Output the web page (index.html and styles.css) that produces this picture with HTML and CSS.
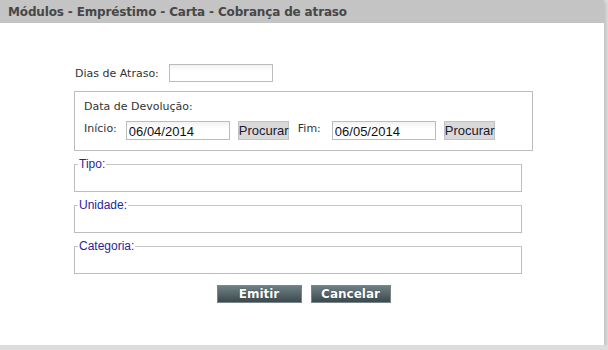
FILE: index.html
```html
<!DOCTYPE html>
<html lang="pt-BR">
<head>
    <meta charset="UTF-8">
    <title>Cobrança de atraso</title>
    <link rel="stylesheet" href="styles.css">
</head>
<body>
    <div class="panel">
        <div class="panel-header">Módulos - Empréstimo - Carta - Cobrança de atraso</div>

        <div class="panel-body">
            <form class="report-form">
                <div class="field-row">
                    <label class="lbl" for="dias">Dias de Atraso:</label>
                    <input type="text" id="dias" class="txt txt-short">
                </div>

                <div class="box">
                    <div class="lbl">Data de Devolução:</div>
                    <div class="date-row">
                        <label class="lbl lbl-up" for="inicio">Início:</label>
                        <input type="text" id="inicio" class="txt" value="06/04/2014">
                        <button type="button" class="btn-search">Procurar</button>
                        <label class="lbl lbl-up lbl-fim" for="fim">Fim:</label>
                        <input type="text" id="fim" class="txt" value="06/05/2014">
                        <button type="button" class="btn-search">Procurar</button>
                    </div>
                </div>

                <fieldset class="group">
                    <legend>Tipo:</legend>
                    <div class="group-body"></div>
                </fieldset>
                <fieldset class="group">
                    <legend>Unidade:</legend>
                    <div class="group-body"></div>
                </fieldset>
                <fieldset class="group">
                    <legend>Categoria:</legend>
                    <div class="group-body"></div>
                </fieldset>

                <div class="actions">
                    <button type="button" class="btn-dark btn-emitir">Emitir</button>
                    <button type="button" class="btn-dark btn-cancelar">Cancelar</button>
                </div>
            </form>
        </div>
    </div>
</body>
</html>
```

FILE: styles.css
```css
body {
    margin: 0;
    padding: 0;
    background-color: #dcdcdc;
    font-family: 'DejaVu Sans', Verdana, sans-serif;
    color: #333;
}

.panel {
    width: 604px;
    height: 345px;
    background: white;
    box-shadow: 2px 2px 3px rgba(0, 0, 0, 0.12);
    display: flex;
    flex-direction: column;
}

.panel-header {
    height: 23px;
    line-height: 24px;
    padding-left: 8px;
    background-color: #c4c4c4;
    color: #474747;
    font-size: 12px;
    font-weight: bold;
    letter-spacing: -0.15px;
}

.panel-body {
    flex: 1;
    margin-left: 3px;
    background: white;
}

.report-form {
    width: 459px;
    margin-left: 71px;
    padding-top: 41px;
}

.lbl {
    font-size: 11px;
    color: #333;
}

.field-row {
    display: flex;
    align-items: center;
    gap: 10px;
    padding-left: 1px;
}

.txt {
    box-sizing: border-box;
    width: 104px;
    height: 19px;
    margin: 0;
    padding: 1px 2px 0;
    border: 1px solid #bcbcbc;
    background: linear-gradient(#f2f2f2, #ffffff 40%);
    font-family: 'Liberation Sans', Arial, sans-serif;
    font-size: 13px;
    color: #111;
    outline: none;
}

.txt-short {
    height: 18px;
}

.box {
    margin-top: 9px;
    height: 60px;
    box-sizing: border-box;
    border: 1px solid #bdbdbd;
    padding: 8px 0 0 9px;
    width: 459px;
}

.date-row {
    display: flex;
    align-items: flex-start;
    margin-top: 8px;
}

.lbl-up {
    margin-top: 1px;
    margin-right: 9px;
}

.lbl-fim {
    margin-left: 9px;
    margin-right: 11px;
}

.btn-search {
    height: 19px;
    width: 51px;
    margin: 0 0 0 8px;
    padding: 0;
    border: 1px solid #c2c2c2;
    background-color: #d9d9d9;
    font-family: 'Liberation Sans', Arial, sans-serif;
    font-size: 13px;
    color: #1a1a33;
    line-height: 17px;
    text-align: center;
}

.group {
    margin: 6px 0 0;
    padding: 0;
    width: 448px;
    box-sizing: border-box;
    border: 1px solid #bdbdbd;
    border-top-color: #c6c6c6;
}

.group legend {
    margin-left: 3px;
    padding: 0 1px;
    font-family: 'Liberation Sans', Arial, sans-serif;
    font-size: 12px;
    line-height: 14px;
    color: #2a1f99;
}

.group-body {
    height: 20px;
}

.actions {
    display: flex;
    justify-content: center;
    gap: 9px;
    margin-top: 11px;
}

.btn-dark {
    height: 18px;
    padding: 0;
    border: 1px solid #7b8588;
    background: linear-gradient(#6f8084, #3c4a4f);
    color: white;
    font-family: 'DejaVu Sans', Verdana, sans-serif;
    font-size: 12px;
    font-weight: bold;
    line-height: 15px;
    text-shadow: 0 0 1px #1d2529;
}

.btn-emitir {
    width: 85px;
}

.btn-cancelar {
    width: 80px;
}
```
